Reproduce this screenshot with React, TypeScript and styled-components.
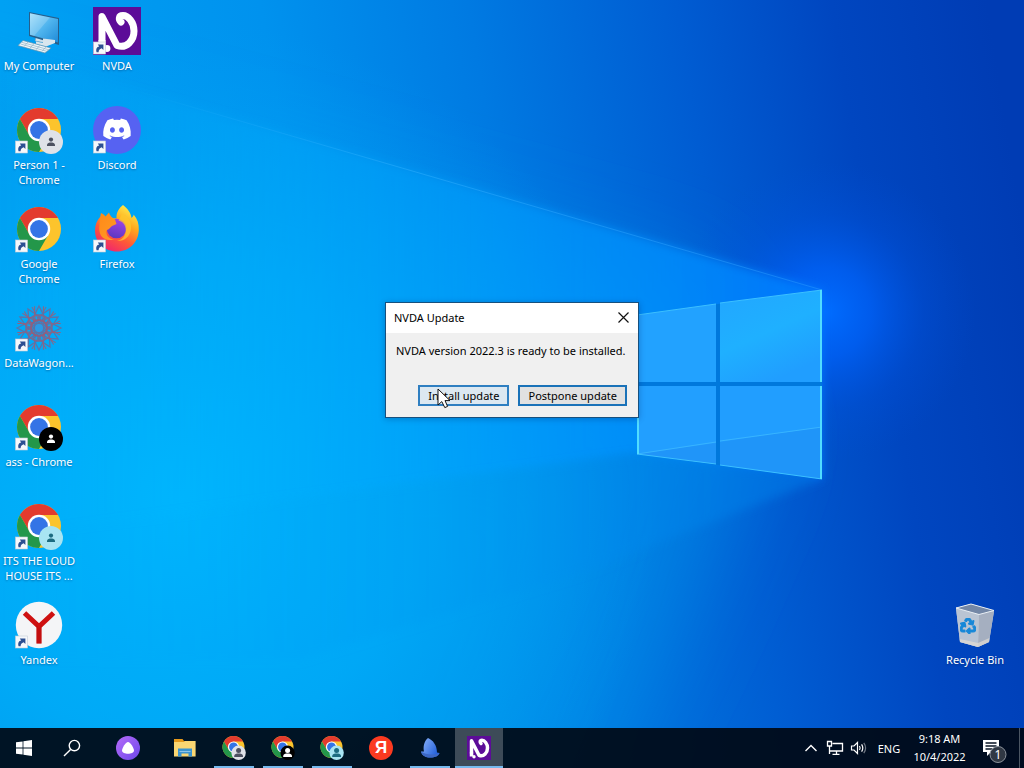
import React from "react";
import styled, { createGlobalStyle } from "styled-components";
import { FaDiscord, FaRecycle } from "react-icons/fa";

const GlobalStyle = createGlobalStyle`
  *, *::before, *::after { box-sizing: border-box; }
  body {
    margin: 0;
    font-family: "Noto Sans", "Open Sans", sans-serif;
    font-size: 11px;
    line-height: 15px;
    cursor: default;
  }
  button { font: inherit; color: inherit; }
`;

const Screen = styled.div`
  position: relative;
  display: flex;
  flex-direction: column;
  min-height: 100vh;
  overflow: hidden;
  background: #0090f5;
`;

const WallpaperSvg = styled.svg`
  position: absolute;
  inset: 0;
  width: 100%;
  height: 100%;
`;

const Desktop = styled.main`
  position: relative;
  flex: 1;
  display: flex;
  justify-content: space-between;
  padding-right: 10px;
`;

const IconGrid = styled.ul`
  display: grid;
  grid-template-rows: repeat(7, 99px);
  grid-auto-flow: column;
  grid-auto-columns: 78px;
  margin: 0;
  padding: 0;
  list-style: none;
`;

const IconCell = styled.li<{ $row?: number; $column?: number }>`
  grid-row: ${(p) => p.$row ?? "auto"};
  grid-column: ${(p) => p.$column ?? "auto"};
`;

const DesktopButton = styled.button`
  display: flex;
  flex-direction: column;
  align-items: center;
  gap: 3px;
  width: 100%;
  padding: 7px 0 0;
  border: 0;
  background: none;
  color: #fff;
`;

const DesktopLabel = styled.span`
  max-width: 78px;
  text-align: center;
  text-shadow: 0 1px 2px rgba(0, 30, 80, 0.45);
  white-space: pre-line;
`;

const LargeIcon = styled.svg`
  display: block;
  width: 48px;
  height: 48px;
`;

const DialogWindow = styled.section`
  position: absolute;
  top: 302px;
  left: calc(50% - 127px);
  width: 254px;
  border: 1px solid #17507e;
  background: #f0f0f0;
  color: #000;
  box-shadow: 0 1px 6px rgba(0, 30, 90, 0.3);
`;

const DialogHeader = styled.header`
  display: flex;
  align-items: center;
  justify-content: space-between;
  height: 30px;
  padding: 0 8px 2px;
  background: #fff;
`;

const DialogTitle = styled.h1`
  margin: 0;
  font-size: 11px;
  font-weight: 400;
`;

const CloseButton = styled.button`
  display: grid;
  place-items: center;
  width: 13px;
  height: 24px;
  padding: 0;
  border: 0;
  background: none;
`;

const DialogMessage = styled.p`
  margin: 0;
  padding: 10px 10px 27px;
`;

const DialogActions = styled.div`
  display: flex;
  justify-content: flex-end;
  gap: 9px;
  padding: 0 11px 11px;
`;

const ActionButton = styled.button<{ $hovered?: boolean }>`
  display: flex;
  align-items: center;
  height: 21px;
  padding: 0 8px;
  border: 2px solid ${(p) => (p.$hovered ? "#2f7fc1" : "#1a72b8")};
  background: ${(p) => (p.$hovered ? "#dce8f1" : "#e1e1e1")};
`;

const Pointer = styled.svg`
  position: absolute;
  top: 388px;
  left: calc(50% - 75px);
  width: 15px;
  height: 22px;
  pointer-events: none;
`;

const Taskbar = styled.footer`
  position: relative;
  display: flex;
  justify-content: space-between;
  height: 40px;
  background: rgba(0, 9, 20, 0.93);
  color: #fff;
`;

const TaskGroup = styled.nav`
  display: flex;
`;

const AppRow = styled.div`
  display: flex;
  gap: 1px;
  margin-left: 9px;
`;

const AssistantSlot = styled.div`
  display: flex;
  margin-left: 8px;
`;

const TaskButton = styled.button<{ $running?: boolean; $active?: boolean }>`
  display: flex;
  align-items: center;
  justify-content: center;
  width: 48px;
  height: 40px;
  padding: 0;
  border: 0;
  background: ${(p) => (p.$active ? "rgba(255, 255, 255, 0.24)" : "none")};
  box-shadow: ${(p) => (p.$active ? "inset 0 -2px #76b9ed" : "none")};
  position: relative;

  &::after {
    content: "";
    display: ${(p) => (p.$running ? "block" : "none")};
    position: absolute;
    right: 4px;
    bottom: 0;
    left: 4px;
    height: 2px;
    background: #76b9ed;
  }
`;

const SmallIcon = styled.svg`
  display: block;
  width: 24px;
  height: 24px;
`;

const YandexBadge = styled.span`
  display: grid;
  place-items: center;
  width: 24px;
  height: 24px;
  border-radius: 50%;
  background: #fb3a20;
  font: 700 17px/24px "Liberation Sans", sans-serif;
`;

const Tray = styled.div`
  display: flex;
  align-items: stretch;
`;

const TrayButton = styled.button<{ $width: number }>`
  display: flex;
  align-items: center;
  justify-content: center;
  width: ${(p) => p.$width}px;
  padding: 0;
  border: 0;
  background: none;
`;

const Clock = styled(TrayButton)`
  flex-direction: column;
  line-height: 18px;
`;

const NotificationButton = styled(TrayButton)`
  margin-left: 6px;
  margin-right: 7px;
`;

const ShowDesktop = styled.button`
  width: 5px;
  padding: 0;
  border: 0;
  border-left: 1px solid #4b5663;
  background: none;
`;

function Wallpaper() {
  return (
    <WallpaperSvg viewBox="0 0 1024 768" preserveAspectRatio="none" aria-hidden="true">
      <defs>
        <linearGradient id="sky" x1="0" y1="0.42" x2="1" y2="0.3">
          <stop offset="0" stopColor="#00a4f4" />
          <stop offset="0.3" stopColor="#0092ee" />
          <stop offset="0.5" stopColor="#007ae2" />
          <stop offset="0.7" stopColor="#005cd2" />
          <stop offset="0.85" stopColor="#0046c0" />
          <stop offset="1" stopColor="#003cb4" />
        </linearGradient>
        <linearGradient id="beam" x1="0" y1="0" x2="1" y2="0">
          <stop offset="0" stopColor="#00b0fc" stopOpacity="0" />
          <stop offset="0.3" stopColor="#00aefc" stopOpacity="0.3" />
          <stop offset="0.6" stopColor="#009efe" stopOpacity="0.6" />
          <stop offset="0.85" stopColor="#008cff" stopOpacity="0.8" />
          <stop offset="1" stopColor="#007cff" stopOpacity="0.85" />
        </linearGradient>
        <radialGradient id="glow" gradientUnits="userSpaceOnUse" cx="826" cy="312" r="150">
          <stop offset="0" stopColor="#006cff" />
          <stop offset="0.3" stopColor="#0062fa" stopOpacity="0.75" />
          <stop offset="0.65" stopColor="#0056e6" stopOpacity="0.28" />
          <stop offset="1" stopColor="#0050d8" stopOpacity="0" />
        </radialGradient>
        <radialGradient id="cyan" gradientUnits="userSpaceOnUse" cx="180" cy="500" r="480">
          <stop offset="0" stopColor="#00b8fe" stopOpacity="0.95" />
          <stop offset="0.5" stopColor="#00b2fc" stopOpacity="0.6" />
          <stop offset="1" stopColor="#00a0f4" stopOpacity="0" />
        </radialGradient>
        <linearGradient id="pane" x1="0" y1="0" x2="0.5" y2="1">
          <stop offset="0" stopColor="#22a6ff" />
          <stop offset="0.55" stopColor="#1fb0ff" />
          <stop offset="1" stopColor="#209eff" />
        </linearGradient>
        <linearGradient id="ray" x1="0" y1="0" x2="1" y2="0">
          <stop offset="0" stopColor="#30b8ff" stopOpacity="0" />
          <stop offset="0.4" stopColor="#30b0ff" stopOpacity="0.5" />
          <stop offset="1" stopColor="#2898ff" stopOpacity="0.5" />
        </linearGradient>
        <linearGradient id="under" x1="0" y1="0" x2="1" y2="0">
          <stop offset="0" stopColor="#00a8ff" stopOpacity="0" />
          <stop offset="0.6" stopColor="#0096f0" stopOpacity="0.3" />
          <stop offset="1" stopColor="#0078e8" stopOpacity="0.6" />
        </linearGradient>
        <filter id="soft" x="-20%" y="-20%" width="140%" height="140%">
          <feGaussianBlur stdDeviation="44" />
        </filter>
        <filter id="slight" x="-10%" y="-10%" width="120%" height="120%">
          <feGaussianBlur stdDeviation="5" />
        </filter>
      </defs>
      <rect width="1024" height="768" fill="url(#sky)" />
      <path d="M-100 60L700 280L760 440L680 620L540 900H-100Z" fill="#0096ec" fillOpacity="0.5" filter="url(#soft)" />
      <path d="M-100 900V440L600 440L560 600L440 900Z" fill="#009eee" fillOpacity="0.45" filter="url(#soft)" />
      <rect width="1024" height="768" fill="url(#cyan)" />
      <rect x="660" y="150" width="364" height="330" fill="url(#glow)" />
      <path d="M-20 45L822 290V479L637 454L-20 538Z" fill="url(#beam)" filter="url(#slight)" />
      <path d="M637 454L822 479L590 570L300 660L-20 660V538Z" fill="url(#under)" filter="url(#slight)" />
      <path d="M130 89L822 290" stroke="url(#ray)" strokeWidth="1" fill="none" />
      <path d="M637 315L822 290V479L637 454Z" fill="#0078dc" />
      <path d="M637 315L716 304V382H637Z" fill="#22a2ff" />
      <path d="M720 303L822 290V382H720Z" fill="url(#pane)" />
      <path d="M637 386H716V464L637 454Z" fill="#229fff" />
      <path d="M720 386H822V479L720 465Z" fill="#219eff" />
      <path d="M637 454L716 443V464Z M720 442L822 427V479L720 465Z" fill="#2092f6" fillOpacity="0.7" />
      <path d="M637 454L716 442M720 441L822 427" stroke="#38b4ff" strokeWidth="1" />
      <path d="M637 315L716 304M720 303L822 290M637 454L716 464M720 465L822 479" stroke="#3cc0ff" strokeWidth="1" fill="none" />
      <path d="M821 290V382M821 386V479M638 386V454" stroke="#50dcff" strokeWidth="2" />
    </WallpaperSvg>
  );
}

function ShortcutArrow() {
  return (
    <g>
      <rect x="0.5" y="35" width="12" height="12" fill="#f6f8fb" stroke="#c4ccd8" strokeWidth="0.6" />
      <path d="M3.6 45.2C2.6 41.8 4 39.8 6.2 39.4L4.8 37.4H10.4V43L8.6 41.3C6.6 42 5.6 43.2 5.6 45.2Z" fill="#2c4f92" />
    </g>
  );
}

function ChromeMark() {
  return (
    <g>
      <circle r="22" fill="#fcc42c" />
      <path d="M-19.05-11A22 22 0 0 1 19.05-11H0V0L-9.53 5.5Z" fill="#e33b2e" />
      <path d="M-19.05-11A22 22 0 0 0 0 22L9.53 5.5L0 0L-9.53 5.5Z" fill="#23974a" />
      <circle r="11.2" fill="#fff" />
      <circle r="8.9" fill="#3474e6" />
    </g>
  );
}

type ProfileColors = { disc: string; person: string };
const grayProfile = { disc: "#dfe2e8", person: "#4c5160" };
const blackProfile = { disc: "#000", person: "#fff" };
const tealProfile = { disc: "#a8e4f2", person: "#1c6b80" };

function ProfileBadge({ disc, person }: ProfileColors) {
  return (
    <g>
      <circle cx="36" cy="36" r="12" fill={disc} />
      <circle cx="36" cy="33.6" r="2.1" fill={person} />
      <path d="M32 40V38.8C32 37 34.5 36.4 36 36.4S40 37 40 38.8V40Z" fill={person} />
    </g>
  );
}

function ChromeIcon({ profile }: { profile?: ProfileColors }) {
  return (
    <LargeIcon viewBox="0 0 48 48" aria-hidden="true">
      <g transform="translate(24 24)"><ChromeMark /></g>
      {profile && <ProfileBadge {...profile} />}
      <ShortcutArrow />
    </LargeIcon>
  );
}

function ChromeTaskIcon({ disc, person }: ProfileColors) {
  return (
    <SmallIcon viewBox="0 0 24 24" aria-hidden="true">
      <g transform="translate(11.5 11) scale(.5)"><ChromeMark /></g>
      <circle cx="16.6" cy="16.8" r="7.2" fill={disc} />
      <circle cx="16.6" cy="14.4" r="2.5" fill={person} />
      <path d="M12.2 21V20C12.2 18 14.6 17.5 16.6 17.5S21 18 21 20V21Z" fill={person} />
    </SmallIcon>
  );
}

function ComputerIcon() {
  return (
    <LargeIcon viewBox="0 0 48 48" aria-hidden="true">
      <defs>
        <linearGradient id="monitor" x1="0" y1="0" x2="1" y2="1">
          <stop offset="0" stopColor="#9edcfa" />
          <stop offset="0.5" stopColor="#4fb4ee" />
          <stop offset="1" stopColor="#1e8bd8" />
        </linearGradient>
      </defs>
      <path d="M21 30L30 28L41 32L36 37L20 34Z" fill="#cfe3ef" stroke="#6899b5" strokeWidth="0.6" />
      <path d="M14 5L44 11V38L14 29Z" fill="#265f8c" />
      <path d="M15 6.2L43 12V35.6L15 27.8Z" fill="url(#monitor)" />
      <path d="M15 6.2L35 10.4L19 29L15 27.8Z" fill="#fff" fillOpacity="0.18" />
      <path d="M28 31.5V36L21 34.6V37L31 39.6L40 36V33Z" fill="#d8e6ee" />
      <path d="M8 33.5L36 41L30 46L3 38.6Z" fill="#eef6fa" stroke="#5f91ad" strokeWidth="0.7" />
      <path d="M7 35.4L34 42.8M5.6 37L32 44.4M13 35L9 39.6M19 36.6L15 41.2M25 38.2L21 42.8M31 39.8L27 44.4" stroke="#8fb2c4" strokeWidth="0.7" />
    </LargeIcon>
  );
}

function NvdaMark() {
  return (
    <g>
      <rect width="48" height="48" fill="#5c0c98" />
      <path d="M9 34V9.5L24 38.5C34 42 41 33 41 24C41 15 35 8.6 30 8.6C25.5 8.6 25.5 12.5 28 15" fill="none" stroke="#fff" strokeWidth="7" strokeLinecap="round" strokeLinejoin="round" />
      <circle cx="14" cy="41.5" r="3.4" fill="#fff" />
      <path d="M5.5 33H12.5V41H5.5Z" fill="#fff" />
    </g>
  );
}

function NvdaIcon() {
  return (
    <LargeIcon viewBox="0 0 48 48" aria-hidden="true"><NvdaMark /><ShortcutArrow /></LargeIcon>
  );
}

function DiscordIcon() {
  return (
    <LargeIcon viewBox="0 0 48 48" aria-hidden="true">
      <circle cx="24" cy="24" r="24" fill="#5662f2" />
      <FaDiscord x="9" y="8" size={30} color="#fff" />
      <ShortcutArrow />
    </LargeIcon>
  );
}

function FirefoxIcon() {
  return (
    <LargeIcon viewBox="0 0 48 48" aria-hidden="true">
      <defs>
        <linearGradient id="flame" x1="0.8" y1="0" x2="0.25" y2="1">
          <stop offset="0" stopColor="#fff44f" />
          <stop offset="0.35" stopColor="#ffa91e" />
          <stop offset="0.65" stopColor="#ff5a36" />
          <stop offset="1" stopColor="#ee2174" />
        </linearGradient>
        <linearGradient id="globe" x1="0.7" y1="0" x2="0.4" y2="1">
          <stop offset="0" stopColor="#a044e8" />
          <stop offset="1" stopColor="#5c38c0" />
        </linearGradient>
        <linearGradient id="fox" x1="0" y1="0" x2="1" y2="1">
          <stop offset="0" stopColor="#ff8a18" />
          <stop offset="1" stopColor="#ff9a24" />
        </linearGradient>
      </defs>
      <path d="M30 0C35 4 38 8 38.5 13C40 12 40.6 10.8 40.6 9.6C44.5 14 46 19 45.8 25C45.4 37.5 36 46.5 24 46.5C11.5 46.5 2 37.5 2 25.5C2 20 4 15 7.5 11.5L9 14C16 14 20 13 23.5 13.5C23 8 26 3 30 0Z" fill="url(#flame)" />
      <circle cx="23.5" cy="23.5" r="9.8" fill="url(#globe)" />
      <path d="M29 9C35 11 39 17 38 24C37 32 31 36.5 24 36C31 34.5 34.5 28 32 21C31 18 28 16 25.5 15.5Z" fill="#ffc72c" fillOpacity="0.75" />
      <path d="M8 8C10 9 11.5 10 12.5 11.5L16 7.5C16.6 10.5 19 12.5 22 14.5L23.5 19C22 20 20.5 20 19 21C17 22.5 16 24.5 13.8 25C12 30 16 34 21 34.5C10 37 5 30 6.5 20C7 15 7 12 8 8Z" fill="url(#fox)" />
      <ShortcutArrow />
    </LargeIcon>
  );
}

function DataWagonIcon() {
  return (
    <LargeIcon viewBox="-24 -24 48 48" aria-hidden="true">
      <g fill="none" stroke="#5c74a8" strokeWidth="1.3">
        {[0, 30, 60, 90, 120, 150].map((angle) => (
          <g key={angle} transform={`rotate(${angle})`}>
            <path d="M-22 0L-10-6L0-4L10-6L22 0L10 6L0 4L-10 6Z" />
            <path d="M-7-21L0-8L7-21M-7 21L0 8L7 21" stroke="#96607c" strokeWidth="1" />
          </g>
        ))}
        <circle r="8" stroke="#8c6080" strokeWidth="2" />
        <circle r="13" stroke="#80688c" />
      </g>
      <circle r="4" fill="#2c9ae4" />
      <g transform="translate(-24 -24)"><ShortcutArrow /></g>
    </LargeIcon>
  );
}

function YandexBrowserIcon() {
  return (
    <LargeIcon viewBox="0 0 48 48" aria-hidden="true">
      <circle cx="24" cy="24" r="23.2" fill="#f4f5f7" />
      <path d="M9.5 12L24 25.5L38.5 12M24 24.5V42.5" fill="none" stroke="#cf1111" strokeWidth="5" />
      <path d="M21.5 23L24 28L26.5 23V42.5H21.5Z" fill="#b80d0d" fillOpacity="0.5" />
      <ShortcutArrow />
    </LargeIcon>
  );
}

function RecycleBinIcon() {
  return (
    <LargeIcon viewBox="0 0 48 48" aria-hidden="true">
      <path d="M5 7L9 41L27 46L38 41L43 10L20 3Z" fill="#cfd5dc" />
      <path d="M5 7L28 13L27 46L9 41Z" fill="#b9c4d3" />
      <path d="M28 13L43 10L38 41L27 46Z" fill="#a5afc0" />
      <path d="M5 7L20 3L43 9.5L28 13.5Z" fill="#7387a6" stroke="#e8eef4" strokeWidth="1" />
      <path d="M8.8 38L27 42L38.4 37L38 41L27 46L9 41Z" fill="#e2ddd4" fillOpacity="0.7" />
      <FaRecycle x="9" y="17" size={16} color="#1788d8" stroke="#1788d8" strokeWidth={36} />
    </LargeIcon>
  );
}

function StartIcon() {
  return (
    <SmallIcon viewBox="0 0 24 24" aria-hidden="true">
      <path d="M4 6.3L10.6 5.4V11.5H4ZM11.4 5.3L20 4V11.5H11.4ZM4 12.4H10.6V18.6L4 17.7ZM11.4 12.4H20V20L11.4 18.7Z" fill="#fff" />
    </SmallIcon>
  );
}

function SearchIcon() {
  return (
    <SmallIcon viewBox="0 0 24 24" aria-hidden="true">
      <g fill="none" stroke="#fff" strokeWidth="1.4"><circle cx="14.4" cy="9.6" r="5.2" /><path d="M10.6 13.4L4 20" /></g>
    </SmallIcon>
  );
}

function AliceIcon() {
  return (
    <SmallIcon viewBox="0 0 24 24" aria-hidden="true">
      <defs><linearGradient id="alice" x1="0" y1="0" x2="1" y2="1"><stop offset="0" stopColor="#b56bf8" /><stop offset="1" stopColor="#6c48ec" /></linearGradient></defs>
      <circle cx="12" cy="12" r="12" fill="url(#alice)" />
      <path d="M12 6C14.2 6 18 12 18 14.6C18 17 14.8 17.8 12 17.8S6 17 6 14.6C6 12 9.8 6 12 6Z" fill="#fff" />
    </SmallIcon>
  );
}

function ExplorerIcon() {
  return (
    <SmallIcon viewBox="0 0 24 24" aria-hidden="true">
      <path d="M1 3H9.5L11 5H22V8H1Z" fill="#e69a1c" />
      <path d="M1 6H11L12 5H22.6V20.5H1Z" fill="#fbd772" />
      <path d="M5 12.5H19V20.5H15.5V17.5H8.5V20.5H5Z" fill="#3c94cf" />
      <path d="M6.5 15H17.5V16H6.5Z" fill="#8bc5ea" />
    </SmallIcon>
  );
}

function SailIcon() {
  return (
    <SmallIcon viewBox="0 0 24 24" aria-hidden="true">
      <defs><linearGradient id="sail" x1="0" y1="0" x2="1" y2="0.6"><stop offset="0" stopColor="#8fb6fa" /><stop offset="1" stopColor="#2360da" /></linearGradient></defs>
      <path d="M10 2C15 4 19 9.5 19 16.5L21.5 17C20.5 20 17 21.5 12.5 21.5C7.5 21.5 4 19.5 3 15.5L6 15.5C5 11 6 5 10 2Z" fill="url(#sail)" />
      <path d="M3 15.5C8 19 15 19.5 21.5 17C20.5 20 17 21.5 12.5 21.5C7.5 21.5 4 19.5 3 15.5Z" fill="#3d68c4" />
    </SmallIcon>
  );
}

type DesktopItem = { label: string; icon: React.ReactNode; row?: number; column?: number };

const shortcuts: DesktopItem[] = [
  { label: "My Computer", icon: <ComputerIcon /> },
  { label: "Person 1 -\nChrome", icon: <ChromeIcon profile={grayProfile} /> },
  { label: "Google\nChrome", icon: <ChromeIcon /> },
  { label: "DataWagon...", icon: <DataWagonIcon /> },
  { label: "ass - Chrome", icon: <ChromeIcon profile={blackProfile} /> },
  { label: "ITS THE LOUD\nHOUSE ITS ...", icon: <ChromeIcon profile={tealProfile} /> },
  { label: "Yandex", icon: <YandexBrowserIcon /> },
  { label: "NVDA", icon: <NvdaIcon /> },
  { label: "Discord", icon: <DiscordIcon /> },
  { label: "Firefox", icon: <FirefoxIcon /> },
];

const system: DesktopItem[] = [{ label: "Recycle Bin", icon: <RecycleBinIcon />, row: 7, column: 1 }];

function DesktopIcons({ items }: { items: DesktopItem[] }) {
  return (
    <IconGrid>
      {items.map((item) => (
        <IconCell key={item.label} $row={item.row} $column={item.column}>
          <DesktopButton type="button">
            {item.icon}
            <DesktopLabel>{item.label}</DesktopLabel>
          </DesktopButton>
        </IconCell>
      ))}
    </IconGrid>
  );
}

function UpdateDialog() {
  return (
    <DialogWindow role="dialog" aria-labelledby="dialog-title">
      <DialogHeader>
        <DialogTitle id="dialog-title">NVDA Update</DialogTitle>
        <CloseButton type="button" aria-label="Close">
          <svg width="11" height="11" viewBox="0 0 11 11" aria-hidden="true"><path d="M0.5 0.5L10.5 10.5M10.5 0.5L0.5 10.5" stroke="#111" strokeWidth="1.2" /></svg>
        </CloseButton>
      </DialogHeader>
      <DialogMessage>NVDA version 2022.3 is ready to be installed.</DialogMessage>
      <DialogActions>
        <ActionButton type="button" $hovered>Install update</ActionButton>
        <ActionButton type="button">Postpone update</ActionButton>
      </DialogActions>
    </DialogWindow>
  );
}

export default function App() {
  return (
    <Screen>
      <GlobalStyle />
      <Wallpaper />
      <Desktop>
        <DesktopIcons items={shortcuts} />
        <DesktopIcons items={system} />
        <UpdateDialog />
      </Desktop>
      <Taskbar>
        <TaskGroup aria-label="Taskbar">
          <TaskButton aria-label="Start"><StartIcon /></TaskButton>
          <TaskButton aria-label="Search"><SearchIcon /></TaskButton>
          <AssistantSlot>
            <TaskButton aria-label="Alice"><AliceIcon /></TaskButton>
          </AssistantSlot>
          <AppRow>
            <TaskButton aria-label="File Explorer"><ExplorerIcon /></TaskButton>
            <TaskButton aria-label="Chrome, Person 1" $running><ChromeTaskIcon {...grayProfile} /></TaskButton>
            <TaskButton aria-label="Chrome, ass" $running><ChromeTaskIcon {...blackProfile} /></TaskButton>
            <TaskButton aria-label="Chrome, third profile" $running><ChromeTaskIcon {...tealProfile} /></TaskButton>
            <TaskButton aria-label="Yandex"><YandexBadge>Я</YandexBadge></TaskButton>
            <TaskButton aria-label="Sail" $running><SailIcon /></TaskButton>
            <TaskButton aria-label="NVDA" $active><SmallIcon viewBox="0 0 48 48" aria-hidden="true"><NvdaMark /></SmallIcon></TaskButton>
          </AppRow>
        </TaskGroup>
        <Tray>
          <TrayButton $width={24} aria-label="Show hidden icons">
            <svg width="14" height="8" viewBox="0 0 14 8" aria-hidden="true"><path d="M1.5 7L7 1.5L12.5 7" fill="none" stroke="#fff" strokeWidth="1.4" /></svg>
          </TrayButton>
          <TrayButton $width={24} aria-label="Network">
            <svg width="18" height="16" viewBox="0 0 18 16" aria-hidden="true"><path d="M1.5 1.5H5.5V6H1.5ZM3.5 6V14M6.5 3.5H16.5V11H3.5M10.5 11V14M6.5 14.3H13.5" fill="none" stroke="#fff" strokeWidth="1.3" /></svg>
          </TrayButton>
          <TrayButton $width={24} aria-label="Volume">
            <svg width="18" height="14" viewBox="0 0 18 14" aria-hidden="true"><path d="M1.5 5H4L7.5 1.5V12.5L4 9H1.5ZM9.5 5Q10.8 7 9.5 9M11.6 3.4Q14 7 11.6 10.6" fill="none" stroke="#fff" strokeWidth="1.2" /><path d="M13.8 1.8Q17.4 7 13.8 12.2" fill="none" stroke="#6d7682" strokeWidth="1.2" /></svg>
          </TrayButton>
          <TrayButton $width={36}>ENG</TrayButton>
          <Clock $width={65}><span>9:18 AM</span><span>10/4/2022</span></Clock>
          <NotificationButton $width={34} aria-label="Notifications, 1 new">
            <svg width="26" height="32" viewBox="0 0 26 32" aria-hidden="true">
              <path d="M1 8H17V20H9L5 24V20H1Z" fill="#fff" />
              <path d="M3.5 11H14.5M3.5 14H14.5M3.5 17H10" stroke="#0a1424" strokeWidth="1.3" />
              <circle cx="16" cy="22.5" r="8" fill="#303844" stroke="#8c939c" strokeWidth="1" />
              <text x="16" y="27" textAnchor="middle" fontSize="12" fill="#fff">1</text>
            </svg>
          </NotificationButton>
          <ShowDesktop aria-label="Show desktop" />
        </Tray>
      </Taskbar>
      <Pointer viewBox="0 0 15 22" aria-hidden="true">
        <path d="M1 1V17L4.8 13.6L7.8 19.6L10.6 18.4L8 12.6H13Z" fill="#fff" stroke="#111" strokeWidth="1" />
      </Pointer>
    </Screen>
  );
}
